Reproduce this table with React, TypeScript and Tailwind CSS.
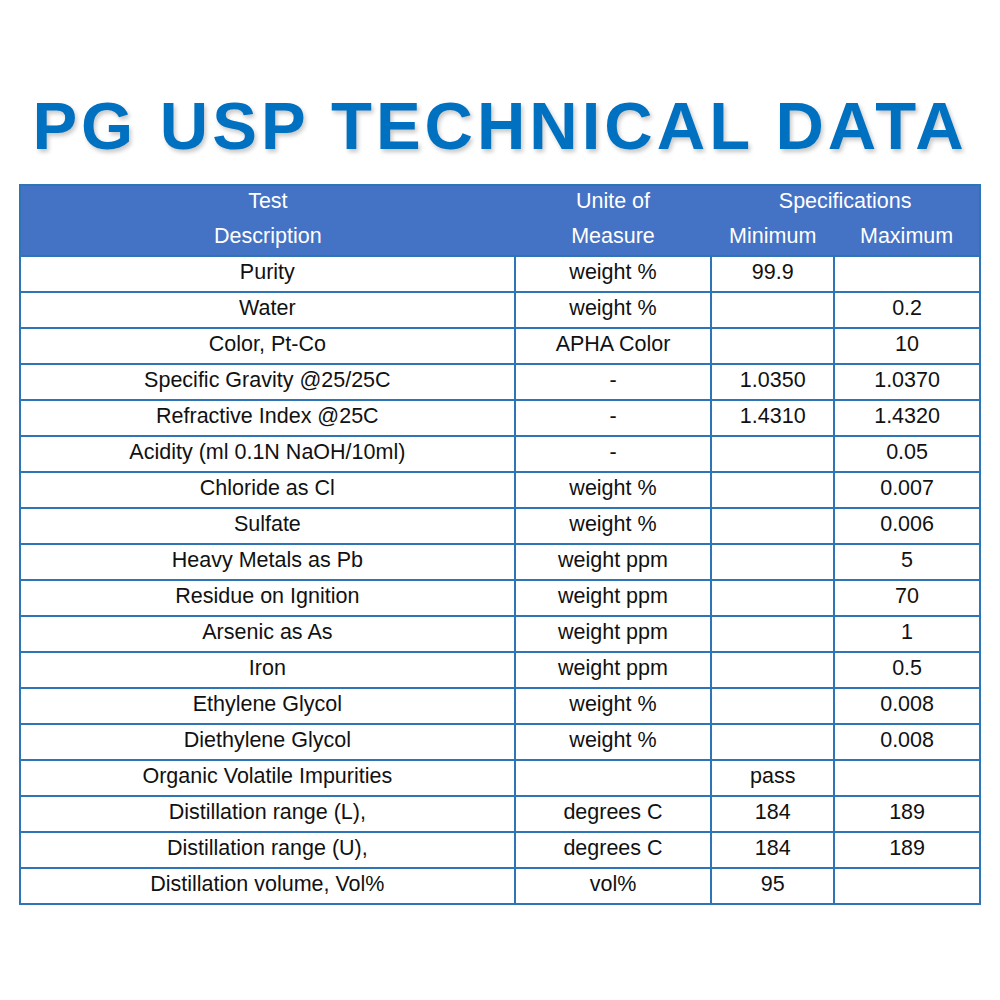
const ROWS: [string, string, string, string][] = [
  ['Purity', 'weight %', '99.9', ''],
  ['Water', 'weight %', '', '0.2'],
  ['Color, Pt-Co', 'APHA Color', '', '10'],
  ['Specific Gravity @25/25C', '-', '1.0350', '1.0370'],
  ['Refractive Index @25C', '-', '1.4310', '1.4320'],
  ['Acidity (ml 0.1N NaOH/10ml)', '-', '', '0.05'],
  ['Chloride as Cl', 'weight %', '', '0.007'],
  ['Sulfate', 'weight %', '', '0.006'],
  ['Heavy Metals as Pb', 'weight ppm', '', '5'],
  ['Residue on Ignition', 'weight ppm', '', '70'],
  ['Arsenic as As', 'weight ppm', '', '1'],
  ['Iron', 'weight ppm', '', '0.5'],
  ['Ethylene Glycol', 'weight %', '', '0.008'],
  ['Diethylene Glycol', 'weight %', '', '0.008'],
  ['Organic Volatile Impurities', '', 'pass', ''],
  ['Distillation range (L),', 'degrees C', '184', '189'],
  ['Distillation range (U),', 'degrees C', '184', '189'],
  ['Distillation volume, Vol%', 'vol%', '95', ''],
];

export default function App() {
  return (
    <div className="w-[1000px] h-[1000px] bg-white pt-[92px] font-['Liberation_Sans',Arial,sans-serif]">
      {/* Title */}
      <h1 className="text-center text-[67px] leading-none font-bold tracking-[4px] text-[#0070c0] [text-shadow:2px_3px_4px_rgba(0,0,0,0.22)] h-[67px]">
        PG USP TECHNICAL DATA
      </h1>

      <div className="mt-[25px] px-[19px]">
        <table className="w-[962px] border-collapse border-2 border-[#2e75b6] text-[21.5px] text-[#111]">
          <colgroup>
            <col className="w-[496px]" />
            <col className="w-[197px]" />
            <col className="w-[123px]" />
            <col className="w-[146px]" />
          </colgroup>
          <thead className="bg-[#4472c4] text-white">
            <tr className="h-[36px]">
              <th className="font-normal text-center align-middle leading-none p-0 pb-[4px]">Test</th>
              <th className="font-normal text-center align-middle leading-none p-0 pb-[4px]">Unite of</th>
              <th colSpan={2} className="font-normal text-center align-middle leading-none p-0 pb-[4px]">Specifications</th>
            </tr>
            <tr className="h-[35px]">
              <th className="font-normal text-center align-middle leading-none p-0 pb-[2px]">Description</th>
              <th className="font-normal text-center align-middle leading-none p-0 pb-[2px]">Measure</th>
              <th className="font-normal text-center align-middle leading-none p-0 pb-[2px]">Minimum</th>
              <th className="font-normal text-center align-middle leading-none p-0 pb-[2px]">Maximum</th>
            </tr>
          </thead>
          <tbody>
            {ROWS.map((r, i) => (
              <tr key={i} className="h-[36px]">
                {r.map((c, j) => (
                  <td key={j} className="border-2 border-[#2e75b6] text-center align-middle p-0 leading-none pb-[2px]">
                    {c}
                  </td>
                ))}
              </tr>
            ))}
          </tbody>
        </table>
      </div>
    </div>
  );
}
